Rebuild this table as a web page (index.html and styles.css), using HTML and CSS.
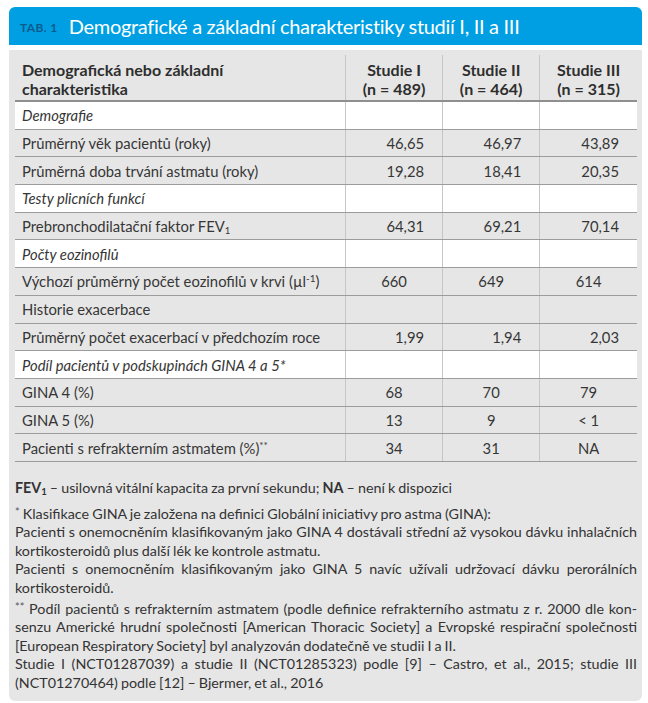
FILE: index.html
```html
<!DOCTYPE html>
<html lang="cs">
<head>
<meta charset="utf-8">
<link rel="stylesheet" href="styles.css">
</head>
<body>
<div class="card">
  <div class="card-head">
    <span class="tab-label">TAB. 1</span>
    <h1 class="title">Demografické a základní charakteristiky studií I, II a III</h1>
  </div>
  <div class="card-body">
    <table class="data">
      <thead>
        <tr>
          <th class="c-name">Demografická nebo základní<br>charakteristika</th>
          <th class="c-val">Studie I<br>(n = 489)</th>
          <th class="c-val">Studie II<br>(n = 464)</th>
          <th class="c-val">Studie III<br>(n = 315)</th>
        </tr>
      </thead>
      <tbody>
        <tr class="group"><td>Demografie</td><td></td><td></td><td></td></tr>
        <tr class="num"><td>Průměrný věk pacientů (roky)</td><td>46,65</td><td>46,97</td><td>43,89</td></tr>
        <tr class="num"><td>Průměrná doba trvání astmatu (roky)</td><td>19,28</td><td>18,41</td><td>20,35</td></tr>
        <tr class="group"><td>Testy plicních funkcí</td><td></td><td></td><td></td></tr>
        <tr class="num"><td>Prebronchodilatační faktor FEV<sub>1</sub></td><td>64,31</td><td>69,21</td><td>70,14</td></tr>
        <tr class="group"><td>Počty eozinofilů</td><td></td><td></td><td></td></tr>
        <tr class="ctr"><td>Výchozí průměrný počet eozinofilů v krvi (µl<sup>-1</sup>)</td><td>660</td><td>649</td><td>614</td></tr>
        <tr class="ctr"><td>Historie exacerbace</td><td></td><td></td><td></td></tr>
        <tr class="num"><td>Průměrný počet exacerbací v předchozím roce</td><td>1,99</td><td>1,94</td><td>2,03</td></tr>
        <tr class="group"><td>Podíl pacientů v podskupinách GINA 4 a 5*</td><td></td><td></td><td></td></tr>
        <tr class="ctr"><td>GINA 4 (%)</td><td>68</td><td>70</td><td>79</td></tr>
        <tr class="ctr"><td>GINA 5 (%)</td><td>13</td><td>9</td><td>&lt; 1</td></tr>
        <tr class="ctr"><td>Pacienti s refrakterním astmatem (%)<sup>**</sup></td><td>34</td><td>31</td><td>NA</td></tr>
      </tbody>
    </table>
    <div class="notes">
      <p class="note note-first"><span class="ln"><b>FEV<sub>1</sub></b> – usilovná vitální kapacita za první sekundu; <b>NA</b> – není k dispozici</span></p>
      <p class="note">
        <span class="ln"><sup>*</sup> Klasifikace GINA je založena na definici Globální iniciativy pro astma (GINA):</span>
        <span class="ln j">Pacienti s onemocněním klasifikovaným jako GINA 4 dostávali střední až vysokou dávku inhalačních</span>
        <span class="ln">kortikosteroidů plus další lék ke kontrole astmatu.</span>
        <span class="ln j">Pacienti s onemocněním klasifikovaným jako GINA 5 navíc užívali udržovací dávku perorálních</span>
        <span class="ln">kortikosteroidů.</span>
      </p>
      <p class="note">
        <span class="ln j"><sup>**</sup> Podíl pacientů s refrakterním astmatem (podle definice refrakterního astmatu z r. 2000 dle kon-</span>
        <span class="ln j">senzu Americké hrudní společnosti [American Thoracic Society] a Evropské respirační společnosti</span>
        <span class="ln">[European Respiratory Society] byl analyzován dodatečně ve studii I a II.</span>
        <span class="ln j">Studie I (NCT01287039) a studie II (NCT01285323) podle [9] – Castro, et al., 2015; studie III</span>
        <span class="ln">(NCT01270464) podle [12] – Bjermer, et al., 2016</span>
      </p>
    </div>
  </div>
</div>
</body>
</html>
```
FILE: styles.css
```css
html, body {
  margin: 0;
  padding: 0;
  background: #ffffff;
}
body {
  font-family: Lato, "Open Sans", sans-serif;
  color: #333333;
}
.card {
  margin: 7px 6px 0 9px;
  width: 633px;
}
.card-head {
  background: #009fe3;
  border-radius: 6px 6px 0 0;
  height: 38px;
  display: flex;
  align-items: center;
  padding-left: 11px;
  gap: 11px;
}
.tab-label {
  font-size: 12px;
  font-weight: 700;
  color: #0b5c8c;
  letter-spacing: 0.4px;
  padding-top: 3px;
}
.title {
  margin: 0;
  font-size: 20px;
  font-weight: 400;
  color: #ffffff;
  letter-spacing: -0.3px;
}
.card-body {
  margin-top: 5px;
  background: #e6e6e6;
  border-radius: 0 0 6px 6px;
  padding: 5px 5px 9px 6px;
}
.data {
  width: 622px;
  border-collapse: collapse;
  font-size: 14.8px;
  color: #363636;
}
.data th {
  font-weight: 700;
  font-size: 16px;
  line-height: 19px;
  padding: 5px 7px 2px;
  border-bottom: 2px solid #8f8f8f;
  color: #2e2e2e;
}
.data th.c-name {
  text-align: left;
  width: 316px;
}
.data th.c-val {
  text-align: center;
}
.data th + th,
.data td + td {
  border-left: 1px solid #c6c6c6;
}
.data td {
  height: 26.7px;
  padding: 0 7px;
  border-bottom: 1px solid #9c9c9c;
  line-height: 18px;
  white-space: nowrap;
}
.data tr.group td {
  background: #ffffff;
  font-style: italic;
}
.data tr.num td + td {
  text-align: right;
  padding-right: 18px;
}
.data tr.ctr td + td {
  text-align: center;
}
.data sub {
  font-size: 9.5px;
  vertical-align: -2px;
  line-height: 0;
}
.data sup {
  font-size: 10px;
  vertical-align: 5px;
  line-height: 0;
}
.notes {
  margin-top: 17px;
  font-size: 14.3px;
  line-height: 18.6px;
  color: #333333;
}
.note {
  margin: 2px 0 0;
}
.note.note-first {
  margin-bottom: 7px;
}
.ln {
  display: block;
  white-space: nowrap;
  word-spacing: -0.6px;
}
.ln.j {
  text-align: justify;
  text-align-last: justify;
}
.note b {
  font-weight: 700;
}
.note sub {
  font-size: 9.5px;
  vertical-align: -2px;
  line-height: 0;
}
.note sup {
  font-size: 11px;
  vertical-align: 3px;
  line-height: 0;
  color: #555;
}
```
